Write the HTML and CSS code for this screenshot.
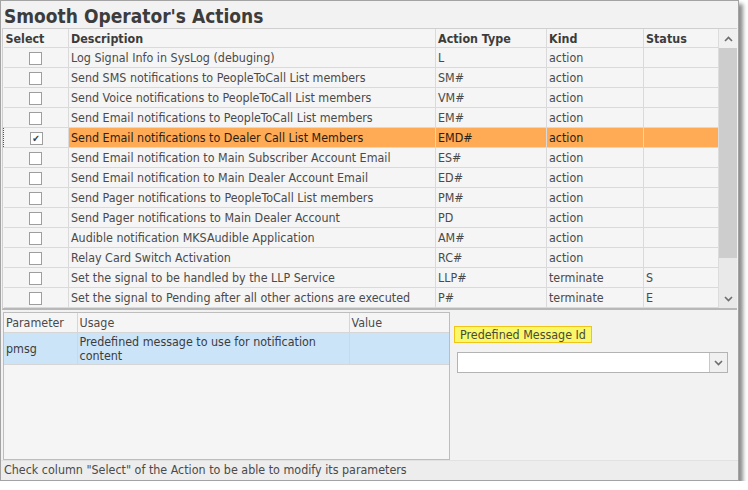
FILE: index.html
```html
<!DOCTYPE html>
<html>
<head>
<meta charset="utf-8">
<link rel="stylesheet" href="styles.css">
</head>
<body>
<div class="window">
  <div class="title">Smooth Operator's Actions</div>
  <div class="grid-wrap">
    <div class="grid">
      <table class="actions">
        <colgroup>
          <col class="c-sel"><col class="c-desc"><col class="c-type"><col class="c-kind"><col class="c-status">
        </colgroup>
        <thead>
          <tr><th>Select</th><th>Description</th><th>Action Type</th><th>Kind</th><th>Status</th></tr>
        </thead>
        <tbody>
          <tr><td class="sel"><span class="cb"></span></td><td>Log Signal Info in SysLog (debuging)</td><td>L</td><td>action</td><td></td></tr>
          <tr><td class="sel"><span class="cb"></span></td><td>Send SMS notifications to PeopleToCall List members</td><td>SM#</td><td>action</td><td></td></tr>
          <tr><td class="sel"><span class="cb"></span></td><td>Send Voice notifications to PeopleToCall List members</td><td>VM#</td><td>action</td><td></td></tr>
          <tr><td class="sel"><span class="cb"></span></td><td>Send Email notifications to PeopleToCall List members</td><td>EM#</td><td>action</td><td></td></tr>
          <tr class="active"><td class="sel"><span class="cb checked">✔</span></td><td>Send Email notifications to Dealer Call List Members</td><td>EMD#</td><td>action</td><td></td></tr>
          <tr><td class="sel"><span class="cb"></span></td><td>Send Email notification to Main Subscriber Account Email</td><td>ES#</td><td>action</td><td></td></tr>
          <tr><td class="sel"><span class="cb"></span></td><td>Send Email notification to Main Dealer Account Email</td><td>ED#</td><td>action</td><td></td></tr>
          <tr><td class="sel"><span class="cb"></span></td><td>Send Pager notifications to PeopleToCall List members</td><td>PM#</td><td>action</td><td></td></tr>
          <tr><td class="sel"><span class="cb"></span></td><td>Send Pager notifications to Main Dealer Account</td><td>PD</td><td>action</td><td></td></tr>
          <tr><td class="sel"><span class="cb"></span></td><td>Audible notification MKSAudible Application</td><td>AM#</td><td>action</td><td></td></tr>
          <tr><td class="sel"><span class="cb"></span></td><td>Relay Card Switch Activation</td><td>RC#</td><td>action</td><td></td></tr>
          <tr><td class="sel"><span class="cb"></span></td><td>Set the signal to be handled by the LLP Service</td><td>LLP#</td><td>terminate</td><td>S</td></tr>
          <tr><td class="sel"><span class="cb"></span></td><td>Set the signal to Pending after all other actions are executed</td><td>P#</td><td>terminate</td><td>E</td></tr>
          <tr class="partial"><td class="sel"></td><td></td><td></td><td></td><td></td></tr>
        </tbody>
      </table>
    </div>
    <div class="vscroll">
      <div class="sbtn up"><svg width="9" height="6" viewBox="0 0 9 6"><path d="M1 5 L4.5 1.5 L8 5" fill="none" stroke="#6d6d6d" stroke-width="1.6"/></svg></div>
      <div class="thumb"></div>
      <div class="track"></div>
      <div class="sbtn down"><svg width="9" height="6" viewBox="0 0 9 6"><path d="M1 1 L4.5 4.5 L8 1" fill="none" stroke="#6d6d6d" stroke-width="1.6"/></svg></div>
    </div>
  </div>
  <div class="bottom">
    <div class="params">
      <table class="ptable">
        <colgroup><col class="p-name"><col class="p-usage"><col class="p-value"></colgroup>
        <thead><tr><th>Parameter</th><th>Usage</th><th>Value</th></tr></thead>
        <tbody>
          <tr class="psel"><td>pmsg</td><td>Predefined message to use for notification content</td><td></td></tr>
        </tbody>
      </table>
    </div>
    <div class="editor">
      <div class="label">Predefined Message Id</div>
      <div class="combo">
        <div class="combo-text"></div>
        <div class="combo-btn"><svg width="9" height="6" viewBox="0 0 9 6"><path d="M1 1 L4.5 4.5 L8 1" fill="none" stroke="#6d6d6d" stroke-width="1.6"/></svg></div>
      </div>
    </div>
  </div>
  <div class="status">Check column "Select" of the Action to be able to modify its parameters</div>
</div>
</body>
</html>
```
FILE: styles.css
```css
html, body {
  margin: 0;
  padding: 0;
  background: #ffffff;
}
body {
  font-family: "DejaVu Sans Condensed", "DejaVu Sans", sans-serif;
  font-size: 12.4px;
  color: #4a4a4a;
}
.window {
  width: 737px;
  height: 479px;
  border: 1px solid #a3a3a3;
  background: #f2f2f2;
  box-shadow: 4px 4px 4px rgba(0, 0, 0, 0.45);
  display: flex;
  flex-direction: column;
  overflow: hidden;
}
.title {
  height: 27px;
  line-height: 30px;
  padding-left: 3px;
  font-family: "DejaVu Sans Condensed", "DejaVu Sans", sans-serif;
  font-weight: bold;
  font-size: 19px;
  color: #3c3c3c;
}
.grid-wrap {
  margin: 0 1px 0 1px;
  height: 282px;
  border-top: 1px solid #cfcfcf;
  border-left: 1px solid #cfcfcf;
  border-bottom: 2px solid #b8b8b8;
  display: flex;
  overflow: hidden;
}
.grid {
  width: 716px;
  overflow: hidden;
  background: #f5f5f5;
}
.actions {
  border-collapse: collapse;
  table-layout: fixed;
  width: 716px;
}
.c-sel { width: 65px; }
.c-desc { width: 367px; }
.c-type { width: 111px; }
.c-kind { width: 97px; }
.c-status { width: 76px; }
.actions th, .actions td {
  height: 19px;
  line-height: 17px;
  padding: 0 0 0 2px;
  border: 1px solid #dadada;
  white-space: nowrap;
  overflow: hidden;
  text-align: left;
}
.actions tr > *:first-child { border-left: none; }
.actions thead tr > * { border-top: none; }
.actions th {
  font-weight: bold;
  color: #3c3c3c;
  height: 18px;
}
.actions td.sel { text-align: center; padding: 0; }
.cb {
  display: inline-block;
  width: 11px;
  height: 11px;
  border: 1px solid #9e9e9e;
  background: #ffffff;
  vertical-align: middle;
  font-size: 10px;
  line-height: 11px;
  color: #404040;
  text-align: center;
}
.actions tr.active td {
  background: #ffaa55;
  color: #2a1f14;
  border-top: 1px dotted #1d5fa0;
  border-bottom: 1px dotted #1d5fa0;
}
.actions tr.active td:first-child { border-left: 1px dotted #1d5fa0; }
.actions tr.active td.sel { background: #f5f5f5; }
.actions tr.active td:last-child { border-right: 1px dotted #1d5fa0; }
.vscroll {
  width: 18px;
  display: flex;
  flex-direction: column;
  background: #e9e9e9;
  border-left: 1px solid #dcdcdc;
}
.sbtn {
  height: 19px;
  display: flex;
  align-items: center;
  justify-content: center;
  background: #f0f0f0;
}
.thumb {
  height: 210px;
  background: #cdcdcd;
}
.track {
  flex: 1;
  background: #e9e9e9;
}
.sbtn.down { background: #e9e9e9; }
.bottom {
  flex: 1;
  display: flex;
  padding: 2px 0 0 2px;
}
.params {
  width: 445px;
  height: 146px;
  border: 1px solid #bdbdbd;
  background: #f5f5f5;
  overflow: hidden;
}
.ptable {
  border-collapse: collapse;
  table-layout: fixed;
  width: 446px;
}
.p-name { width: 73px; }
.p-usage { width: 272px; }
.p-value { width: 101px; }
.ptable th, .ptable td {
  border: 1px solid #d6d6d6;
  padding: 0 0 0 2px;
  text-align: left;
  font-weight: normal;
  color: #4a4a4a;
  vertical-align: middle;
}
.ptable th { height: 19px; line-height: 18px; border-top: none; }
.ptable tr > *:first-child { border-left: none; }
.ptable td { height: 31px; line-height: 14px; }
.ptable tr.psel td { background: #cce4f7; color: #3c3c3c; }
.editor {
  flex: 1;
  padding: 14px 0 0 4px;
}
.label {
  display: inline-block;
  background: #f8f86a;
  border: 1px solid #f0c419;
  padding: 0 5px 0 5px;
  height: 15px;
  line-height: 15px;
  color: #4a4a3a;
}
.combo {
  margin: 9px 10px 0 3px;
  height: 19px;
  border: 1px solid #b3b3b3;
  background: #ffffff;
  display: flex;
}
.combo-text { flex: 1; }
.combo-btn {
  width: 17px;
  border-left: 1px solid #c8c8c8;
  background: #f0f0f0;
  display: flex;
  align-items: center;
  justify-content: center;
}
.status {
  height: 19px;
  line-height: 18px;
  padding-left: 3px;
  background: #ededed;
  border-top: 1px solid #e2e2e2;
  color: #4a4a4a;
}
```
